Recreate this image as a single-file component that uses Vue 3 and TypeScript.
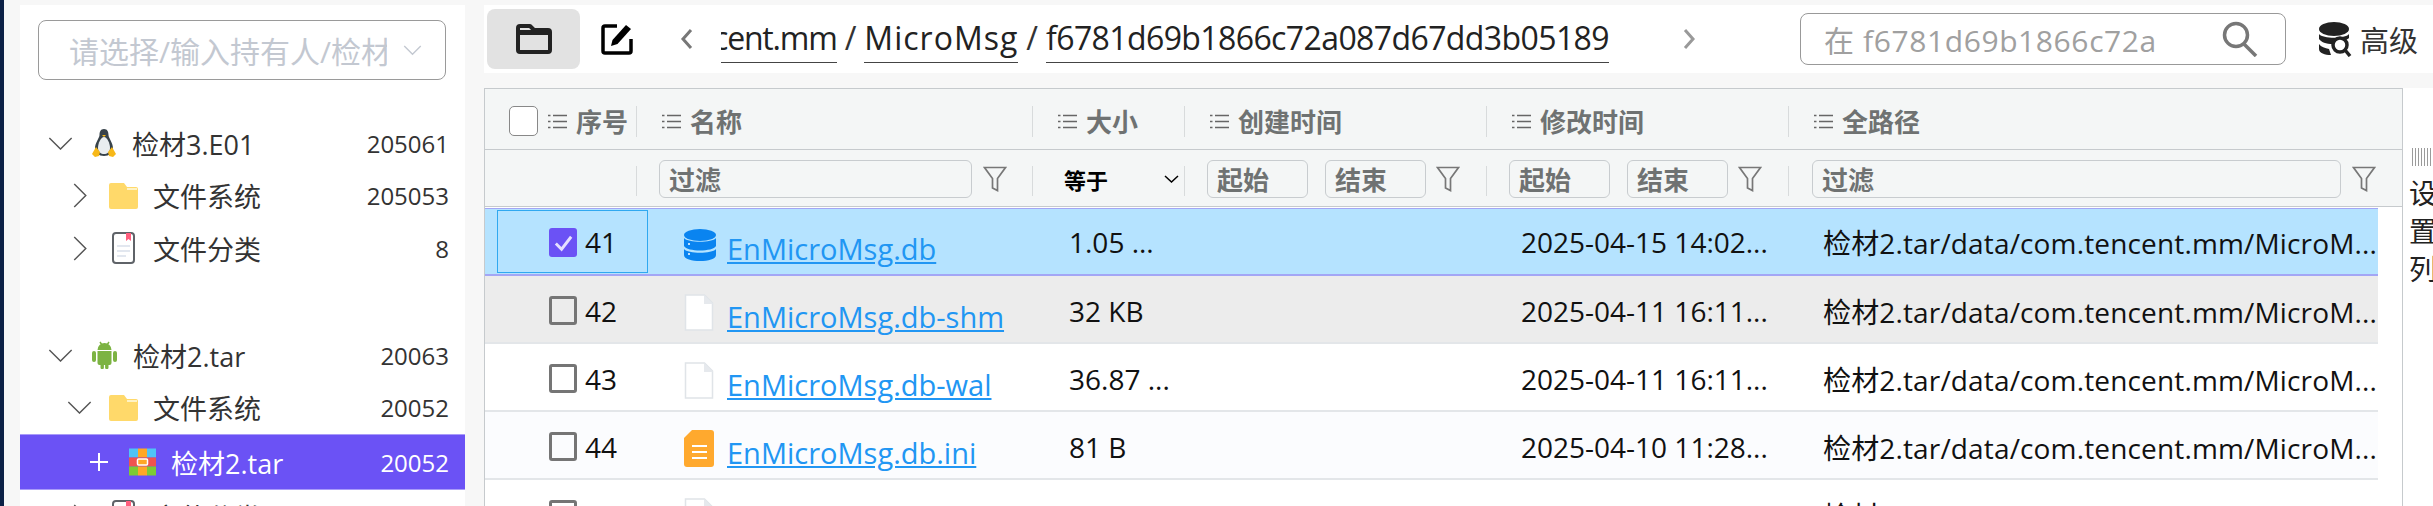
<script setup lang="ts">
const head = [
  { label: '名称', w: 396 },
  { label: '大小', w: 152 },
  { label: '创建时间', w: 302 },
  { label: '修改时间', w: 302 },
  { label: '全路径', w: 613 },
];
type Row = { no: number; name: string; size: string; time: string; icon: string; cls: string; checked?: boolean };
const rows: Row[] = [
  { no: 41, name: 'EnMicroMsg.db', size: '1.05 ...', time: '2025-04-15 14:02...', icon: 'db', cls: 'sel', checked: true },
  { no: 42, name: 'EnMicroMsg.db-shm', size: '32 KB', time: '2025-04-11 16:11...', icon: 'file', cls: 'hover' },
  { no: 43, name: 'EnMicroMsg.db-wal', size: '36.87 ...', time: '2025-04-11 16:11...', icon: 'file', cls: '' },
  { no: 44, name: 'EnMicroMsg.db.ini', size: '81 B', time: '2025-04-10 11:28...', icon: 'ini', cls: 'alt' },
  { no: 45, name: 'EnMicroMsg.db.sm', size: '100 B', time: '2025-04-11 14:24...', icon: 'file', cls: '' },
];
const path = '检材2.tar/data/com.tencent.mm/MicroM...';
</script>

<template>
  <div class="page">
    <div class="edge"></div>
    <aside class="side">
      <div class="select">
        <span class="ph">请选择/输入持有人/检材</span>
        <svg class="sel-arrow" viewBox="0 0 20 12"><path d="M1 1l9 9 9-9" /></svg>
      </div>
      <div class="tree">
        <div class="node l0">
          <svg class="chev" viewBox="0 0 26 14"><path d="M1 1l12 12L25 1" /></svg>
          <svg class="ico tux" viewBox="0 0 24 28">
            <path d="M12 0C8.500 0 7.500 3 7.500 6 7.500 9 3 14 3 19c0 5 4 8 9 8s9-3 9-8c0-5-4.500-10-4.500-13 0-3-1-6-4.500-6z" fill="#37424a" />
            <path d="M12 8c-3 0-6 6-6 11 0 4 3 6 6 6s6-2 6-6c0-5-3-11-6-11z" fill="#e9edf0" />
            <path d="M0 25l4-7 4 5-1 4-4 1zM24 25l-4-7-4 5 1 4 4 1z" fill="#f7b818" />
            <path d="M10 6h4l-2 2z" fill="#f7b818" />
          </svg>
          <span class="lbl">检材3.E01</span><span class="cnt">205061</span>
        </div>
        <div class="node l1">
          <svg class="chev side-chev" viewBox="0 0 14 26"><path d="M1 1l12 12L1 25" /></svg>
          <svg class="ico folder" viewBox="0 0 29 26">
            <path d="M0 2a2 2 0 0 1 2-2h13l3 4h9a2 2 0 0 1 2 2v18a2 2 0 0 1-2 2H2a2 2 0 0 1-2-2z" fill="#ffd96a" />
            <path d="M18 5h10v2H18z" fill="#fff3c4" />
          </svg>
          <span class="lbl">文件系统</span><span class="cnt">205053</span>
        </div>
        <div class="node l1">
          <svg class="chev side-chev" viewBox="0 0 14 26"><path d="M1 1l12 12L1 25" /></svg>
          <svg class="ico book" viewBox="0 0 23 32">
            <rect x="1" y="1" width="21" height="30" rx="3" fill="#fff" stroke="#5f6368" stroke-width="2" />
            <path d="M14 1h5v8l-2.500-2L14 9z" fill="#ff5f7e" />
            <path d="M5 14h13M5 19h13M5 24h9" stroke="#e2e7ef" stroke-width="2" />
          </svg>
          <span class="lbl">文件分类</span><span class="cnt">8</span>
        </div>
        <div class="gap"></div>
        <div class="node l0">
          <svg class="chev" viewBox="0 0 26 14"><path d="M1 1l12 12L25 1" /></svg>
          <svg class="ico droid" viewBox="0 0 25 28">
            <path d="M5.500 9a7 7 0 0 1 14 0z" fill="#7cb342" />
            <path d="M8 1l2 3M17 1l-2 3" stroke="#7cb342" stroke-width="1.500" />
            <path d="M5.500 10h14v12a2 2 0 0 1-2 2h-1v2.500a1.700 1.700 0 0 1-3.400 0V24h-1.200v2.500a1.700 1.700 0 0 1-3.400 0V24h-1a2 2 0 0 1-2-2z" fill="#7cb342" />
            <rect x="0" y="10" width="4" height="11" rx="2" fill="#7cb342" />
            <rect x="21" y="10" width="4" height="11" rx="2" fill="#7cb342" />
          </svg>
          <span class="lbl">检材2.tar</span><span class="cnt">20063</span>
        </div>
        <div class="node l1 open">
          <svg class="chev" viewBox="0 0 26 14"><path d="M1 1l12 12L25 1" /></svg>
          <svg class="ico folder" viewBox="0 0 29 26">
            <path d="M0 2a2 2 0 0 1 2-2h13l3 4h9a2 2 0 0 1 2 2v18a2 2 0 0 1-2 2H2a2 2 0 0 1-2-2z" fill="#ffd96a" />
            <path d="M18 5h10v2H18z" fill="#fff3c4" />
          </svg>
          <span class="lbl">文件系统</span><span class="cnt">20052</span>
        </div>
        <div class="node l2 active">
          <svg class="plus" viewBox="0 0 18 18"><path d="M9 0v18M0 9h18" /></svg>
          <svg class="ico zip" viewBox="0 0 27 27">
            <rect width="9" height="9" fill="#4fc3f7" /><rect x="18" width="9" height="9" fill="#4fc3f7" />
            <rect x="9" width="9" height="9" fill="#ffa726" />
            <rect y="9" width="27" height="9" fill="#ef5350" />
            <rect y="18" width="9" height="9" fill="#7ccb35" /><rect x="18" y="18" width="9" height="9" fill="#7ccb35" />
            <rect x="9" y="18" width="9" height="9" fill="#ffa726" />
            <rect x="8.500" y="10.500" width="10" height="6" rx="1" fill="#ffa726" stroke="#fff" stroke-width="1.500" />
          </svg>
          <span class="lbl">检材2.tar</span><span class="cnt">20052</span>
        </div>
        <div class="node l1">
          <svg class="chev side-chev" viewBox="0 0 14 26"><path d="M1 1l12 12L1 25" /></svg>
          <svg class="ico book" viewBox="0 0 23 32">
            <rect x="1" y="1" width="21" height="30" rx="3" fill="#fff" stroke="#5f6368" stroke-width="2" />
            <path d="M14 1h5v8l-2.500-2L14 9z" fill="#ff5f7e" />
          </svg>
          <span class="lbl">文件分类</span><span class="cnt">8</span>
        </div>
      </div>
    </aside>

    <main class="main">
      <div class="toolbar">
        <button class="tbtn">
          <svg viewBox="0 0 36 30" width="36" height="30">
            <path d="M2 4a2 2 0 0 1 2-2h10l4 4h14a2 2 0 0 1 2 2v18a2 2 0 0 1-2 2H4a2 2 0 0 1-2-2z" fill="none" stroke="#222" stroke-width="4" stroke-linejoin="round" />
            <path d="M2 6h32v5H2z" fill="#222" />
          </svg>
        </button>
        <svg class="edit" viewBox="0 0 34 34" width="34" height="34">
          <path d="M17 4H5a2 2 0 0 0-2 2v23a2 2 0 0 0 2 2h24a2 2 0 0 0 2-2V17" fill="none" stroke="#000" stroke-width="3.500" />
          <path d="M11 24l1.500-6L26 3l5 4-13.500 15z" fill="#000" />
        </svg>
        <svg class="nav left" viewBox="0 0 13 22"><path d="M11 2L3 11l8 9" /></svg>
        <div class="crumbs">
          <span class="c first-c">cent.mm</span><i>/</i><span class="c mid">MicroMsg</span><i>/</i><span class="c hash">f6781d69b1866c72a087d67dd3b05189</span>
        </div>
        <svg class="nav right" viewBox="0 0 13 22"><path d="M2 2l8 9-8 9" /></svg>
        <div class="search">
          <span class="sph">在 f6781d69b1866c72a087d67dd3b05189</span>
          <svg viewBox="0 0 36 36" width="36" height="36"><circle cx="14" cy="14" r="11.500" fill="none" stroke="#777" stroke-width="3.500" /><path d="M22 23l12 12" stroke="#777" stroke-width="3.500" /></svg>
        </div>
        <div class="adv">
          <svg viewBox="0 0 34 35" width="34" height="35">
            <ellipse cx="16" cy="7" rx="15" ry="7" fill="#222" />
            <path d="M1 12c4 5 26 5 30 0v4c-1 1-3 2-5 2-3-1-9 0-11 4C8 22 3 20 1 17z" fill="#222" />
            <path d="M1 22c2 3 6 4 10 5l2 6c-6 0-12-2-12-6z" fill="#222" />
            <circle cx="22" cy="23" r="7" fill="#fff" stroke="#222" stroke-width="3.500" />
            <path d="M27 28l5 6" stroke="#222" stroke-width="3.500" />
          </svg>
          <span>高级</span>
        </div>
      </div>

      <div class="content">
        <div class="table">
          <div class="thead h1">
            <div class="th first">
              <span class="cb-head"></span>
              <svg class="lines" viewBox="0 0 19 15"><path d="M5 1.500h14M5 7.500h14M5 13.500h14M0 1.500h2.500M0 7.500h2.500M0 13.500h2.500" /></svg>
              <b>序号</b>
            </div>
            <div v-for="h in head" :key="h.label" class="th" :style="{ width: h.w + 'px' }">
              <svg class="lines" viewBox="0 0 19 15"><path d="M5 1.500h14M5 7.500h14M5 13.500h14M0 1.500h2.500M0 7.500h2.500M0 13.500h2.500" /></svg>
              <b>{{ h.label }}</b>
            </div>
          </div>
          <div class="thead h2">
            <div class="fc first"></div>
            <div class="fc f-name">
              <span class="inp wide">过滤</span>
              <svg class="funnel" viewBox="0 0 24 26"><path d="M1.500 1.500h21l-8 11v12l-5-2.500v-9.500z" /></svg>
            </div>
            <div class="fc f-size"><b>等于</b><svg viewBox="0 0 15 8" class="dd"><path d="M1 1l6.500 6L14 1" /></svg></div>
            <div class="fc f-date">
              <span class="inp">起始</span><span class="inp">结束</span>
              <svg class="funnel" viewBox="0 0 24 26"><path d="M1.500 1.500h21l-8 11v12l-5-2.500v-9.500z" /></svg>
            </div>
            <div class="fc f-date">
              <span class="inp">起始</span><span class="inp">结束</span>
              <svg class="funnel" viewBox="0 0 24 26"><path d="M1.500 1.500h21l-8 11v12l-5-2.500v-9.500z" /></svg>
            </div>
            <div class="fc f-path">
              <span class="inp wide">过滤</span>
              <svg class="funnel" viewBox="0 0 24 26"><path d="M1.500 1.500h21l-8 11v12l-5-2.500v-9.500z" /></svg>
            </div>
          </div>
          <div class="tbody">
            <div v-for="r in rows" :key="r.no" class="row" :class="r.cls">
              <div class="td c-no">
                <span v-if="r.checked" class="cb on"><svg viewBox="0 0 24 24"><path d="M4 13l6 6 10-13" /></svg></span>
                <span v-else class="cb"></span>
                <span>{{ r.no }}</span>
              </div>
              <div class="td c-name">
                <svg v-if="r.icon === 'db'" class="fi" viewBox="0 0 32 32">
                  <ellipse cx="16" cy="6" rx="16" ry="6" fill="#0a84f0" />
                  <path d="M0 9c4 5 28 5 32 0v8c-3 6-29 6-32 0zM0 20c4 5 28 5 32 0v6c0 8-32 8-32 0z" fill="#0a84f0" />
                  <circle cx="5" cy="15" r="1" fill="#fff" /><circle cx="5" cy="25" r="1" fill="#fff" />
                </svg>
                <svg v-else-if="r.icon === 'ini'" class="fi" viewBox="0 0 30 37">
                  <path d="M8 0h19a3 3 0 0 1 3 3v31a3 3 0 0 1-3 3H3a3 3 0 0 1-3-3V8z" fill="#ffa92e" />
                  <path d="M8 16h15M8 22h15M8 28h15" stroke="#fff" stroke-width="2" />
                </svg>
                <svg v-else class="fi" viewBox="0 0 30 37">
                  <path d="M1.500 1h19l8 8v27h-27z" fill="#fff" stroke="#e0e4e8" stroke-width="1.500" />
                  <path d="M20 1v9h9z" fill="#e6e9ed" />
                </svg>
                <a>{{ r.name }}</a>
              </div>
              <div class="td c-size">{{ r.size }}</div>
              <div class="td c-ctime"></div>
              <div class="td c-mtime">{{ r.time }}</div>
              <div class="td c-path">{{ path }}</div>
            </div>
          </div>
        </div>
        <div class="settings">
          <span class="grip"></span>
          <span class="stxt">设置列</span>
        </div>
      </div>
    </main>
  </div>
</template>

<style>
html, body { margin: 0; background: #f7f7f7; overflow: hidden; }
</style>

<style scoped>
.page {
  width: 2433px;
  height: 506px;
  display: flex;
  overflow: hidden;
  background: #f7f7f7;
  font-family: "Open Sans", "Noto Sans CJK SC", sans-serif;
  color: #222;
}
.edge { width: 4px; background: #0c2146; flex: none; }
.side {
  width: 445px;
  margin: 5px 0 0 16px;
  background: #fff;
  flex: none;
  padding: 15px 0 0 18px;
  box-sizing: border-box;
}
.select {
  width: 408px;
  height: 60px;
  box-sizing: border-box;
  border: 1px solid #9a9a9a;
  border-radius: 8px;
  display: flex;
  align-items: center;
  padding-left: 30px;
}
.ph {
  width: 318px;
  overflow: hidden;
  white-space: nowrap;
  font-size: 30px;
  color: #c3c8d1;
  flex: none;
}
.sel-arrow { width: 19px; height: 11px; margin-left: 16px; fill: none; stroke: #c3c8d1; stroke-width: 1.500; }
.tree { margin: 37px 0 0 -18px; width: 445px; }
.node { height: 52.5px; display: flex; align-items: center; font-size: 27px; color: #333; }
.node .lbl { flex: 1; white-space: nowrap; }
.cnt { font-size: 24px; padding-right: 16px; color: #333; }
.l0 { padding-left: 28px; }
.l1 { padding-left: 53px; }
.l1.open { padding-left: 47px; }
.l2 { padding-left: 70px; }
.gap { height: 54.5px; }
.chev { width: 25px; height: 13px; fill: none; stroke: #555; stroke-width: 1.500; flex: none; }
.side-chev { width: 14px; height: 25px; }
.ico { flex: none; }
.tux { width: 24px; height: 28px; margin: 0 16px 0 19px; }
.droid { width: 25px; height: 28px; margin: 0 16px 0 19px; }
.folder { width: 29px; height: 26px; margin: 0 15px 0 22px; }
.open .folder { margin-left: 17px; }
.book { width: 23px; height: 32px; margin: 0 18px 0 25px; }
.zip { width: 27px; height: 28px; margin: 0 15px 0 21px; }
.active {
  background: #6b52f5;
  color: #fff;
  height: 56px;
  border-top: 1px solid #a99bf9;
  border-bottom: 1px solid #a99bf9;
  box-sizing: border-box;
}
.active .cnt { color: #fff; }
.plus { width: 18px; height: 18px; fill: none; stroke: #fff; stroke-width: 2; flex: none; }

.main { flex: 1; min-width: 0; margin: 5px 0 0 19px; display: flex; flex-direction: column; }
.toolbar {
  height: 68px;
  background: #fff;
  display: flex;
  align-items: center;
  flex: none;
  padding-left: 3px;
}
.tbtn {
  width: 93px;
  height: 60px;
  border: 0;
  border-radius: 8px;
  background: #e2e2e2;
  display: flex;
  align-items: center;
  justify-content: center;
  padding: 0;
  flex: none;
}
.edit { margin-left: 20px; flex: none; }
.nav { width: 13px; height: 22px; fill: none; stroke: #999; stroke-width: 3; flex: none; }
.nav.left { margin-left: 46px; stroke: #777; }
.nav.right { margin-left: 74px; }
.crumbs {
  width: 888px;
  margin-left: 28px;
  height: 48px;
  overflow: hidden;
  display: flex;
  justify-content: flex-end;
  flex: none;
  font-size: 32px;
  line-height: 46px;
  white-space: nowrap;
  color: #222;
}
.crumbs i { font-style: normal; margin: 0 8px; color: #333; }
.c { height: 47px; border-bottom: 1px solid #444; flex: none; }
.first-c { letter-spacing: -1.2px; }
.mid { letter-spacing: 1px; }
.hash { letter-spacing: -0.6px; }
.search {
  margin-left: 104px;
  width: 486px;
  height: 52px;
  box-sizing: border-box;
  border: 1px solid #999;
  border-radius: 8px;
  display: flex;
  align-items: center;
  padding-left: 23px;
  flex: none;
}
.sph { width: 331px; overflow: hidden; white-space: nowrap; font-size: 30px; letter-spacing: 0.6px; color: #a0a0a0; flex: none; margin-right: 67px; }
.adv { display: flex; align-items: center; gap: 8px; margin-left: 32px; font-size: 29px; color: #333; flex: none; }

.content { display: flex; flex: 1; min-height: 0; margin-top: 15px; }
.table { width: 1918px; flex: none; border-left: 1px solid #c6cacd; box-sizing: border-box; background: #fff; }
.thead { display: flex; background: #f4f6f6; align-items: center; }
.h1 { height: 56px; border-top: 1px solid #c6cacd; border-bottom: 1px solid #c6cacd; padding-top: 4px; box-sizing: content-box; }
.h2 { height: 56px; border-bottom: 1px solid #c6cacd; }
.th {
  display: flex;
  align-items: center;
  gap: 9px;
  height: 31px;
  box-sizing: border-box;
  padding-left: 25px;
  border-left: 1px solid #d8dbdc;
  font-size: 26px;
  color: #6f7272;
  flex: none;
  white-space: nowrap;
}
.th b { font-weight: 700; }
.th.first { border-left: 0; width: 151px; padding-left: 24px; }
.cb-head { width: 29px; height: 30px; background: #fff; border: 1px solid #888; border-radius: 5px; box-sizing: border-box; margin-right: 1px; flex: none; }
.lines { width: 19px; height: 15px; fill: none; stroke: #666; stroke-width: 1.700; flex: none; }
.fc {
  display: flex;
  align-items: center;
  height: 38px;
  margin-top: 1px;
  box-sizing: border-box;
  flex: none;
  background: linear-gradient(#d8dbdc, #d8dbdc) no-repeat 0 6px / 1px 30px;
}
.fc.first { width: 151px; background: none; }
.f-name { width: 396px; padding-left: 23px; }
.f-name .wide { width: 313px; }
.f-size { width: 152px; padding-left: 32px; font-size: 22px; }
.f-size b { width: 100px; color: #000; }
.dd { width: 15px; height: 8px; fill: none; stroke: #000; stroke-width: 1.500; }
.f-date { width: 302px; padding-left: 23px; gap: 17px; }
.f-date .inp { width: 101px; }
.f-date .funnel { margin-left: -7px; }
.f-path { width: 613px; padding-left: 24px; }
.f-path .wide { width: 529px; }
.inp {
  height: 38px;
  box-sizing: border-box;
  border: 1px solid #c8cccf;
  border-radius: 6px;
  padding-left: 9px;
  display: flex;
  align-items: center;
  font-size: 26px;
  font-weight: 700;
  color: #6f7272;
  flex: none;
}
.funnel { width: 24px; height: 26px; margin-left: 11px; fill: none; stroke: #777; stroke-width: 1.700; flex: none; }

.tbody { padding-top: 1px; width: 1893px; }
.row {
  display: flex;
  height: 68px;
  box-sizing: border-box;
  border-bottom: 2px solid #e3e6e9;
  align-items: center;
  font-size: 28px;
  color: #111;
  background: #fff;
}
.row.sel { background: #b5e3ff; border-top: 1px solid #a3a6f5; border-bottom-color: #a3a6f5; }
.row.hover { background: #ececec; }
.row.alt { background: #fbfcfe; }
.td { white-space: nowrap; overflow: hidden; box-sizing: border-box; flex: none; }
.c-no {
  width: 151px;
  margin-left: 12px;
  padding: 3px 0 0 52px;
  display: flex;
  align-items: center;
  gap: 8px;
  align-self: stretch;
}
.row.sel .c-no { outline: 1px solid #2fa8f0; outline-offset: -1px; margin-top: 1px; margin-bottom: 1px; padding-top: 1px; }
.cb { width: 28px; height: 29px; box-sizing: border-box; border: 3px solid #757575; border-radius: 3px; flex: none; }
.cb.on { background: #6b52f5; border: 0; display: flex; align-items: center; justify-content: center; }
.cb.on svg { width: 23px; height: 23px; fill: none; stroke: #e5e0ff; stroke-width: 3; }
.c-name { width: 384px; display: flex; align-items: center; align-self: stretch; padding-left: 36px; }
.fi { width: 30px; height: 37px; margin: 6px 13px 0 0; flex: none; }
.row.sel .fi { height: 32px; width: 32px; margin-right: 11px; }
.c-name a { color: #2196f3; text-decoration: underline; font-size: 29px; margin-top: 14px; }
.c-size { width: 152px; padding: 3px 0 0 37px; }
.c-ctime { width: 302px; }
.c-mtime { width: 302px; padding: 3px 0 0 35px; }
.c-path { width: 590px; padding: 3px 0 0 35px; letter-spacing: 0.15px; }
.row.sel .c-size, .row.sel .c-mtime, .row.sel .c-path { padding-top: 1px; }

.settings {
  flex: 1;
  border-left: 1px solid #c6cacd;
  padding: 60px 0 0 9px;
  display: flex;
  flex-direction: column;
  background: #fff;
  overflow: hidden;
  min-width: 0;
}
.grip {
  width: 21px;
  height: 18px;
  background: repeating-linear-gradient(90deg, #9b9b9b 0 1px, transparent 1px 3px);
  flex: none;
}
.stxt { font-size: 28px; line-height: 38px; width: 28px; margin: 8px 0 0 -3px; color: #222; word-break: break-all; flex: none; }
</style>
